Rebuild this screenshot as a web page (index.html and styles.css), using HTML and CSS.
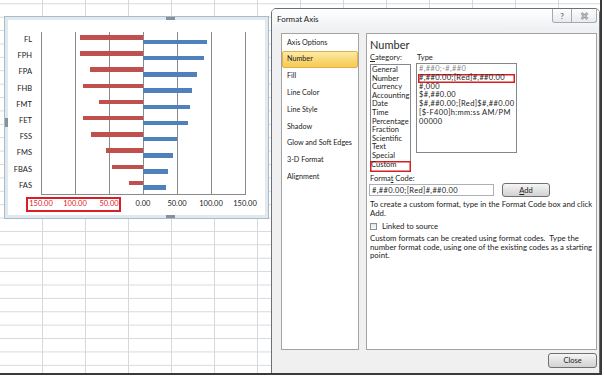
FILE: index.html
```html
<!DOCTYPE html>
<html lang="en">
<head>
  <meta charset="UTF-8">
  <title>Format Axis</title>
  <link rel="stylesheet" href="styles.css">
</head>
<body>
  <div class="screen">

    <!-- Chart object on the sheet -->
    <div class="chart">
      <span class="grip grip-top"></span>
      <span class="grip grip-left"></span>
      <span class="grip grip-bottom"></span>

      <div class="chart-body">
        <div class="cat-labels">
          <span>FL</span>
          <span>FPH</span>
          <span>FPA</span>
          <span>FHB</span>
          <span>FMT</span>
          <span>FET</span>
          <span>FSS</span>
          <span>FMS</span>
          <span>FBAS</span>
          <span>FAS</span>
        </div>

        <div class="plot">
          <div class="bar-row"><span class="bar-neg" style="width:61.7%"></span><span class="bar-pos" style="width:62.7%"></span></div>
          <div class="bar-row"><span class="bar-neg" style="width:61.7%"></span><span class="bar-pos" style="width:59.8%"></span></div>
          <div class="bar-row"><span class="bar-neg" style="width:52%"></span><span class="bar-pos" style="width:52.9%"></span></div>
          <div class="bar-row"><span class="bar-neg" style="width:58.7%"></span><span class="bar-pos" style="width:48%"></span></div>
          <div class="bar-row"><span class="bar-neg" style="width:43.1%"></span><span class="bar-pos" style="width:46%"></span></div>
          <div class="bar-row"><span class="bar-neg" style="width:58.7%"></span><span class="bar-pos" style="width:44%"></span></div>
          <div class="bar-row"><span class="bar-neg" style="width:51%"></span><span class="bar-pos" style="width:33.3%"></span></div>
          <div class="bar-row"><span class="bar-neg" style="width:36.3%"></span><span class="bar-pos" style="width:29.3%"></span></div>
          <div class="bar-row"><span class="bar-neg" style="width:30.4%"></span><span class="bar-pos" style="width:24.5%"></span></div>
          <div class="bar-row"><span class="bar-neg" style="width:13.7%"></span><span class="bar-pos" style="width:22.5%"></span></div>
        </div>

        <div class="axis">
          <span class="neg">150.00</span>
          <span class="neg">100.00</span>
          <span class="neg">50.00</span>
          <span>0.00</span>
          <span>50.00</span>
          <span>100.00</span>
          <span>150.00</span>
          <span class="axis-mark"></span>
        </div>
      </div>
    </div>

    <!-- Format Axis dialog -->
    <div class="dialog">
      <div class="titlebar">
        <span class="title">Format Axis</span>
        <div class="caption-btns">
          <span class="cap-btn help">?</span>
          <span class="cap-btn close">
            <svg width="9" height="8" viewBox="0 0 9 8">
              <path d="M1.5 1 L7.5 7 M7.5 1 L1.5 7" stroke="#7a7a7a" stroke-width="2.4" fill="none"/>
              <path d="M1.5 1 L7.5 7 M7.5 1 L1.5 7" stroke="#f4f4f4" stroke-width="0.9" fill="none"/>
            </svg>
          </span>
        </div>
      </div>

      <div class="dialog-main">
        <div class="nav">
          <div class="nav-item">Axis Options</div>
          <div class="nav-item active">Number</div>
          <div class="nav-item">Fill</div>
          <div class="nav-item">Line Color</div>
          <div class="nav-item">Line Style</div>
          <div class="nav-item">Shadow</div>
          <div class="nav-item">Glow and Soft Edges</div>
          <div class="nav-item">3-D Format</div>
          <div class="nav-item">Alignment</div>
        </div>

        <div class="pane">
          <h2>Number</h2>

          <div class="picker">
            <div class="cat-col">
              <div class="field-label"><u>C</u>ategory:</div>
              <div class="cat-list">
                <div>General</div>
                <div>Number</div>
                <div>Currency</div>
                <div>Accounting</div>
                <div>Date</div>
                <div>Time</div>
                <div>Percentage</div>
                <div>Fraction</div>
                <div>Scientific</div>
                <div>Text</div>
                <div>Special</div>
                <div class="marked">Custom</div>
              </div>
            </div>
            <div class="type-col">
              <div class="field-label">Type</div>
              <div class="type-list">
                <div class="faded">#,##0;-#,##0</div>
                <div class="marked">#,##0.00;[Red]#,##0.00</div>
                <div>#,000</div>
                <div>$#,##0.00</div>
                <div>$#,##0.00;[Red]$#,##0.00</div>
                <div>[$-F400]h:mm:ss AM/PM</div>
                <div>00000</div>
              </div>
            </div>
          </div>

          <div class="field-label code-label">Forma<u>t</u> Code:</div>
          <div class="code-row">
            <input class="code-input" type="text" value="#,##0.00;[Red]#,##0.00">
            <button class="btn add-btn"><u>A</u>dd</button>
          </div>

          <p class="note">To create a custom format, type in the Format Code box and click Add.</p>

          <label class="check-row">
            <span class="checkbox"></span>
            <span>Linked to source</span>
          </label>

          <p class="note desc">Custom formats can be created using format codes.&nbsp; Type the number format code, using one of the existing codes as a starting point.</p>
        </div>
      </div>

      <div class="dialog-foot">
        <button class="btn close-btn">Close</button>
      </div>
    </div>

  </div>
</body>
</html>
```

FILE: styles.css
```css
body {
  margin: 0;
  background: #fff;
  font-family: Lato, "Liberation Sans", sans-serif;
  color: #222;
}

/* sheet with gridlines */
.screen {
  position: relative;
  width: 600px;
  height: 373px;
  overflow: hidden;
  border-right: 2px solid #3a3a3a;
  border-bottom: 2px solid #3a3a3a;
  background-color: #fff;
  background-image:
    linear-gradient(to right, #d6d9dc 1px, transparent 1px),
    linear-gradient(to bottom, #d6d9dc 1px, transparent 1px);
  background-size: 43px 13.4px;
  background-position: 42px 3.3px;
}

/* chart */
.chart {
  position: absolute;
  left: 5px;
  top: 17px;
  width: 263px;
  height: 201px;
  box-sizing: border-box;
  border: 3px solid #e1e8ee;
  outline: 1px solid #a9bac8;
  background: #fff;
}

.grip {
  position: absolute;
  background-image: radial-gradient(circle, #7f8f9f 0.7px, transparent 0.9px);
  background-size: 2px 2px;
}

.grip-top {
  left: 158px;
  top: -3px;
  width: 9px;
  height: 3px;
}

.grip-bottom {
  left: 158px;
  bottom: -3px;
  width: 9px;
  height: 3px;
}

.grip-left {
  left: -3px;
  top: 98px;
  width: 3px;
  height: 9px;
}

.chart-body {
  display: grid;
  grid-template-columns: 24px 205px;
  column-gap: 9px;
  padding-top: 12px;
  font-size: 7.5px;
  color: #1a1a1a;
}

.cat-labels {
  display: flex;
  flex-direction: column;
}

.cat-labels span {
  height: 16.2px;
  line-height: 16.2px;
  text-align: right;
}

.plot {
  height: 162px;
  border-bottom: 1px solid #8a8a8a;
  background-image: repeating-linear-gradient(to right, #8a8a8a 0 1px, transparent 1px 34px);
  display: flex;
  flex-direction: column;
}

.bar-row {
  display: grid;
  grid-template-columns: 102px 102px;
  height: 16.2px;
  align-items: start;
}

.bar-neg {
  justify-self: end;
  height: 4.5px;
  margin-top: 3px;
  background: #c0504d;
}

.bar-pos {
  height: 4.5px;
  margin-top: 7.8px;
  background: #4f81bd;
}

.axis {
  grid-column: 2;
  position: relative;
  display: grid;
  grid-template-columns: repeat(7, 34px);
  margin-left: -17px;
  margin-top: 4px;
  line-height: 10px;
  text-align: center;
}

.axis .neg {
  color: #e0202a;
}

.axis-mark {
  position: absolute;
  left: 2px;
  top: -2px;
  width: 95px;
  height: 15px;
  box-sizing: border-box;
  border: 2px solid #d81e26;
}

/* dialog */
.dialog {
  position: absolute;
  left: 271px;
  top: 8px;
  width: 329px;
  height: 366px;
  box-sizing: border-box;
  border: 1px solid #6b7075;
  border-radius: 5px 5px 0 0;
  background: #f0f0f0;
  display: flex;
  flex-direction: column;
}

.titlebar {
  height: 20px;
  display: flex;
  align-items: flex-start;
  justify-content: space-between;
  border-radius: 4px 4px 0 0;
  background: linear-gradient(#ffffff, #eef1f4);
}

.title {
  padding-left: 5px;
  line-height: 20px;
  font-size: 8px;
  color: #1a1a1a;
}

.caption-btns {
  display: flex;
  margin-right: 2px;
}

.cap-btn {
  width: 20px;
  height: 14px;
  box-sizing: border-box;
  display: flex;
  align-items: center;
  justify-content: center;
  border: 1px solid #a6aaae;
  border-top: none;
  background: linear-gradient(#fdfdfd, #e8ebee);
  color: #777;
  font-size: 8px;
  font-weight: bold;
}

.cap-btn.help {
  border-radius: 0 0 0 3px;
}

.cap-btn.close {
  width: 25px;
  border-left: none;
  border-radius: 0 0 3px 0;
}

.dialog-main {
  display: flex;
  gap: 7px;
  height: 317px;
  padding: 4px 2px 0 9px;
}

.nav {
  width: 78px;
  box-sizing: border-box;
  border: 1px solid #a3a3a3;
  background: #fff;
  padding-top: 0.6px;
}

.nav-item {
  height: 16.8px;
  line-height: 16.8px;
  padding-left: 5px;
  box-sizing: border-box;
  font-size: 7.2px;
}

.nav-item.active {
  line-height: 14.8px;
  padding-left: 4px;
  border: 1px solid #e2b043;
  border-radius: 2px;
  background: linear-gradient(#fdeaa8, #f9d774 55%, #f6cb55);
}

.pane {
  flex: 1;
  box-sizing: border-box;
  border: 1px solid #a3a3a3;
  background: #fff;
  padding: 4px 0 0 3px;
  font-size: 7.5px;
}

.pane h2 {
  margin: 0;
  font-size: 11px;
  font-weight: normal;
  line-height: 14px;
  color: #2a2a2a;
}

.picker {
  display: flex;
  gap: 6px;
  margin-top: 1px;
}

.field-label {
  line-height: 9px;
}

.cat-col {
  width: 41px;
}

.cat-list {
  height: 108px;
  margin-top: 2px;
  box-sizing: border-box;
  border: 1px solid #828790;
  padding: 1px 0 0 1px;
  line-height: 8.6px;
}

.cat-list .marked {
  height: 11px;
  margin: 0 -1px 0 -2px;
  padding-left: 1px;
  box-shadow: inset 0 0 0 1.5px #d42020;
}

.type-col {
  width: 100px;
}

.type-list {
  height: 90px;
  margin-top: 1px;
  margin-left: -1px;
  box-sizing: border-box;
  border: 1px solid #828790;
  padding: 1px 0 0 2px;
  line-height: 8.8px;
  letter-spacing: 0.35px;
  white-space: nowrap;
}

.type-list .faded {
  color: #8a8a8a;
}

.type-list .marked {
  margin: 0 1px 0 -1px;
  padding-left: 1px;
  box-shadow: inset 0 0 0 1.5px #d42020;
}

.code-label {
  margin-top: 2px;
}

.code-row {
  display: flex;
  align-items: center;
  gap: 8px;
  height: 14px;
}

.code-input {
  width: 125px;
  height: 12px;
  box-sizing: border-box;
  margin: 0 0 0 -1px;
  padding: 0 2px;
  border: 1px solid #a9b0b8;
  font-family: inherit;
  font-size: 7.5px;
  letter-spacing: 0.35px;
  color: #222;
}

.btn {
  box-sizing: border-box;
  padding: 0;
  border: 1px solid #707070;
  border-radius: 3px;
  background: linear-gradient(#f6f6f6, #e3e3e3 50%, #d2d2d2);
  font-family: inherit;
  font-size: 7.5px;
  color: #222;
}

.add-btn {
  width: 48px;
  height: 14px;
}

.note {
  margin: 3px 0 0;
  font-size: 7.8px;
  line-height: 9px;
}

.check-row {
  display: flex;
  align-items: center;
  gap: 5px;
  margin-top: 4px;
  font-size: 7.8px;
  line-height: 8px;
}

.checkbox {
  width: 7px;
  height: 7px;
  box-sizing: border-box;
  border: 1px solid #8e8f8f;
  background: linear-gradient(#e6e6e6, #fafafa);
}

.note.desc {
  margin-top: 4px;
  line-height: 8.7px;
}

.dialog-foot {
  display: flex;
  justify-content: flex-end;
  padding: 3px 2px 0 0;
}

.close-btn {
  width: 49px;
  height: 15px;
}
```
